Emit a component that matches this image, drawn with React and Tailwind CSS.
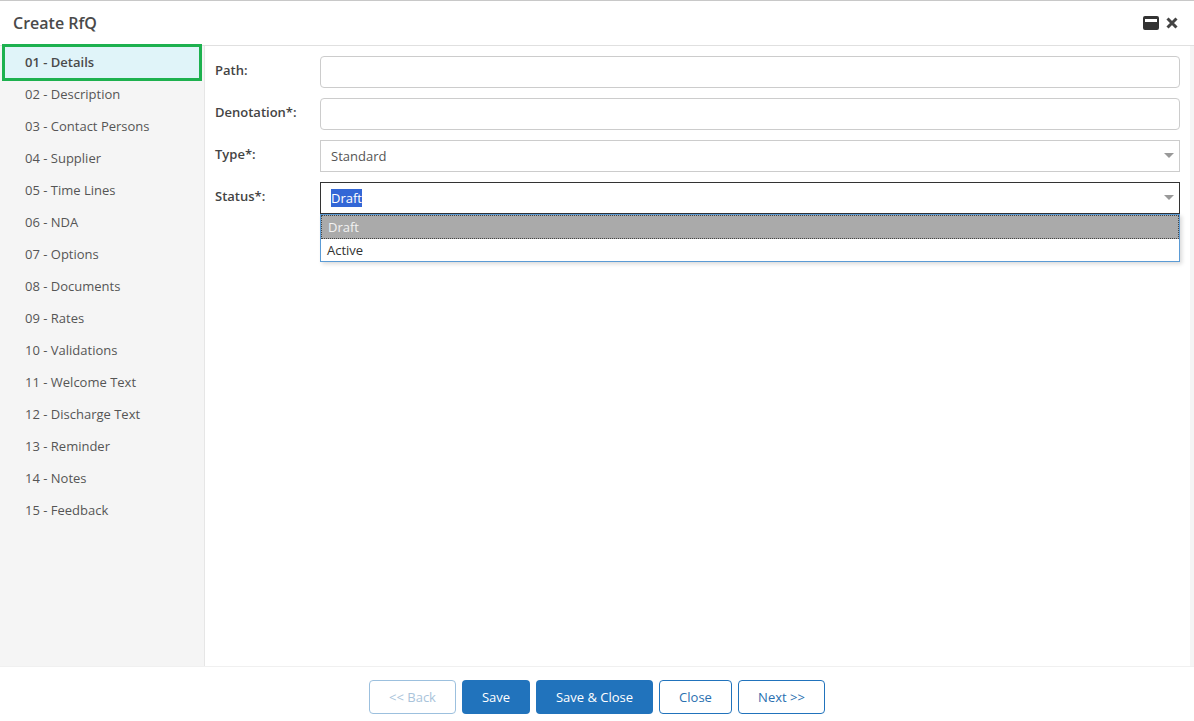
const items = ["01 - Details","02 - Description","03 - Contact Persons","04 - Supplier","05 - Time Lines","06 - NDA","07 - Options","08 - Documents","09 - Rates","10 - Validations","11 - Welcome Text","12 - Discharge Text","13 - Reminder","14 - Notes","15 - Feedback"];

function Caret() {
  return <span className="absolute right-[6px] top-[13px] w-0 h-0 border-x-[5px] border-x-transparent border-t-[5px] border-t-[#999]" />;
}

function Row({ label, children }) {
  return (
    <div className="flex h-[32px] mb-[10px]">
      <label className="w-[105px] text-[13px] font-semibold text-[#444] leading-[28px]">{label}</label>
      <div className="flex-1 relative">{children}</div>
    </div>
  );
}

export default function App() {
  return (
    <div className="w-[1194px] h-[721px] overflow-hidden bg-white flex flex-col border-t border-[#c8c8c8] text-[#444]" style={{ fontFamily: '"Open Sans", sans-serif' }}>
      <header className="h-[45px] shrink-0 flex items-center justify-between pl-[13px] pr-[16px] pb-[1px] border-b border-[#e0e0e0]">
        <h1 className="text-[16px] font-semibold text-[#4a4a4a] leading-none">Create RfQ</h1>
        <div className="flex items-center gap-[7px]">
          <svg width="16" height="14" viewBox="0 0 16 14"><path fill="#333" fillRule="evenodd" d="M2 0h12a2 2 0 0 1 2 2v10a2 2 0 0 1-2 2H2a2 2 0 0 1-2-2V2a2 2 0 0 1 2-2zM2 3v3h12V3z" /></svg>
          <svg width="12" height="12" viewBox="0 0 12 12"><path stroke="#444" strokeWidth="3" d="M1.5 1.5l9 9M10.5 1.5l-9 9" /></svg>
        </div>
      </header>
      <div className="flex-1 flex min-h-0">
        <aside className="w-[205px] shrink-0 bg-[#f5f5f5] border-r border-[#e6e6e6] relative">
          <ul className="text-[13px] text-[#555]">
            {items.map((t) => (
              <li key={t} className="h-[32px] pl-[25px] leading-[32px]">{t}</li>
            ))}
          </ul>
          <div className="absolute left-[2px] top-[-2px] w-[200px] h-[37px] border-[3px] border-[#1db14f] bg-[#e0f4f9] flex items-center pl-[20px] text-[13px] font-semibold text-[#4a4a4a]">01 - Details</div>
        </aside>
        <main className="flex-1 bg-white pt-[10px] pl-[10px] pr-[10px] text-[13px] border-r-[4px] border-[#f5f5f5]">
          <Row label="Path:"><input className="w-full h-[32px] border border-[#ccc] rounded-[4px] bg-white" /></Row>
          <Row label="Denotation*:"><input className="w-full h-[32px] border border-[#ccc] rounded-[4px] bg-white" /></Row>
          <Row label="Type*:">
            <div className="w-full h-[32px] border border-[#ccc] pl-[10px] leading-[30px] text-[#555]">Standard<Caret /></div>
          </Row>
          <Row label="Status*:">
            <div className="w-full h-[32px] border border-[#333] pl-[10px] leading-[30px] text-[#555]">
              <span className="bg-[#3367d6] text-white">Draft</span><Caret />
            </div>
            <div className="absolute left-0 right-0 top-[32px] h-[48px] border border-[#5b9bd5] bg-white shadow-[2px_2px_4px_rgba(0,0,0,0.15)] text-[13px] z-10">
              <div className="h-[24px] bg-[#aaa] text-[#f2f2f2] border border-dotted border-[#444] pl-[6px] leading-[22px]">Draft</div>
              <div className="h-[22px] text-[#333] pl-[6px] leading-[22px]">Active</div>
            </div>
          </Row>
        </main>
      </div>
      <footer className="h-[55px] shrink-0 bg-white border-t border-[#f0f0f0] flex justify-center items-start pt-[13px] gap-[6px] text-[13px]">
        <button className="w-[87px] h-[34px] pt-[1px] border border-[#9cc0de] rounded-[4px] text-[#a9c3da]">&lt;&lt; Back</button>
        <button className="w-[68px] h-[34px] pt-[1px] bg-[#2173bc] rounded-[4px] text-white font-medium">Save</button>
        <button className="w-[117px] h-[34px] pt-[1px] bg-[#2173bc] rounded-[4px] text-white font-medium">Save &amp; Close</button>
        <button className="w-[73px] h-[34px] pt-[1px] border border-[#2173bc] rounded-[4px] text-[#2a70b0]">Close</button>
        <button className="w-[87px] h-[34px] pt-[1px] border border-[#2173bc] rounded-[4px] text-[#2a70b0]">Next &gt;&gt;</button>
      </footer>
    </div>
  );
}
